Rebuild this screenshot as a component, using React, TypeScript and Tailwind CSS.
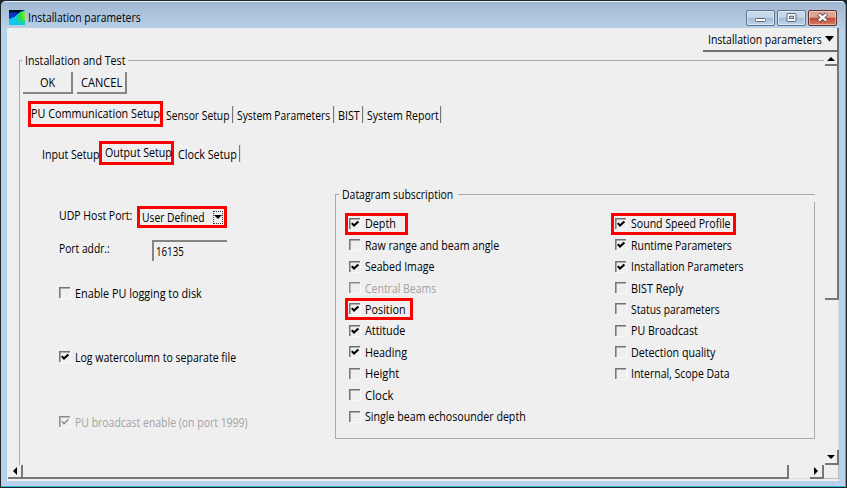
import { useLayoutEffect, useRef, type ReactNode } from 'react';

/** Text condensed horizontally so that it fills a fixed width. */
function Label({ children, w, className = '' }: { children: string; w: number; className?: string }) {
  const ref = useRef<HTMLSpanElement>(null);
  useLayoutEffect(() => {
    const el = ref.current;
    if (!el) return;
    el.style.transform = `scaleX(${(w + 0.5) / el.offsetWidth})`;
  }, [children, w]);
  return (
    <span className={`inline-block h-[15px] shrink-0 whitespace-nowrap ${className}`} style={{ width: w }}>
      <span ref={ref} className="inline-block origin-left">{children}</span>
    </span>
  );
}

function Highlight({ className }: { className: string }) {
  return <div className={`pointer-events-none absolute border-[3px] border-[#fe0000] ${className}`} />;
}

function Check({ label, w, checked, disabled, children, className = '' }: {
  label: string; w: number; checked?: boolean; disabled?: boolean; children?: ReactNode; className?: string;
}) {
  return (
    <div className={`relative flex items-center ${className}`}>
      <svg width="12" height="12" viewBox="0 0 12 12" className="mr-1 shrink-0">
        <path d="M.8 11V.8H11" fill="none" stroke={disabled ? '#8c8c8c' : '#717171'} strokeWidth="1.5" />
        <path d="M1.5 11.5h10V1.5" fill="none" stroke="#f8f8f8" />
        {checked && (
          <path d="M2.8 5.1L5 7.6L9.4 3.4" fill="none" stroke={disabled ? '#777' : '#000'} strokeWidth={disabled ? 1.2 : 2.1} />
        )}
      </svg>
      <Label w={w} className={disabled ? 'text-[#a3a3a3]' : ''}>{label}</Label>
      {children}
    </div>
  );
}

function WinButton({ kind }: { kind: 'min' | 'max' | 'close' }) {
  return (
    <div className={`flex h-4 w-[29px] items-center justify-center rounded-[2px] border shadow-[inset_0_0_0_1px_rgba(255,255,255,0.45)] ${kind === 'close' ? 'border-[#652c2c] bg-linear-to-b from-[#dca397] from-45% via-[#bd4632] via-50% to-[#d68068]' : 'border-[#5d728c] bg-linear-to-b from-[#c5d7eb] from-45% via-[#a2bad4] via-50% to-[#bed5eb]'}`}>
      <svg width="15" height="12" viewBox="0 0 15 12">
        {kind === 'min' && <rect x="2.5" y="6.5" width="10" height="3" rx="1" fill="#fff" stroke="#596575" />}
        {kind === 'max' && (
          <>
            <rect x="3" y="1.5" width="9" height="8" rx="1" fill="#fff" stroke="#596575" />
            <rect x="5.5" y="4.2" width="4" height="2.4" fill="#b9cde2" stroke="#596575" />
          </>
        )}
        {kind === 'close' && (
          <>
            <path d="M3.5 2L11.5 9M11.5 2L3.5 9" stroke="#604548" strokeWidth="4.2" />
            <path d="M3.8 2.3L11.2 8.7M11.2 2.3L3.8 8.7" stroke="#fff" strokeWidth="2.4" />
          </>
        )}
      </svg>
    </div>
  );
}

type Item = { label: string; w: number; checked?: boolean; disabled?: boolean; mark?: string };

const leftItems: Item[] = [
  { label: 'Depth', w: 30, checked: true, mark: '-left-1 top-0 h-[22px] w-[63px]' },
  { label: 'Raw range and beam angle', w: 134 },
  { label: 'Seabed Image', w: 69, checked: true },
  { label: 'Central Beams', w: 71, disabled: true },
  { label: 'Position', w: 40, checked: true, mark: '-left-1 -top-[1px] h-[22px] w-[68px]' },
  { label: 'Attitude', w: 40, checked: true },
  { label: 'Heading', w: 42, checked: true },
  { label: 'Height', w: 34 },
  { label: 'Clock', w: 28 },
  { label: 'Single beam echosounder depth', w: 160 },
];

const rightItems: Item[] = [
  { label: 'Sound Speed Profile', w: 99, checked: true, mark: '-left-1 top-0 h-[22px] w-[125px]' },
  { label: 'Runtime Parameters', w: 100, checked: true },
  { label: 'Installation Parameters', w: 112, checked: true },
  { label: 'BIST Reply', w: 52 },
  { label: 'Status parameters', w: 88 },
  { label: 'PU Broadcast', w: 66 },
  { label: 'Detection quality', w: 84 },
  { label: 'Internal, Scope Data', w: 98 },
];

function Column({ items }: { items: Item[] }) {
  return (
    <div className="flex flex-col">
      {items.map((it) => (
        <Check key={it.label} {...it} className="h-[21.45px]">
          {it.mark && <Highlight className={it.mark} />}
        </Check>
      ))}
    </div>
  );
}

const Separator = () => <div className="h-[17px] w-[2px] shrink-0 border-r border-[#ddd] bg-[#777]" />;

function Arrow({ dir }: { dir: 'up' | 'down' | 'left' | 'right' }) {
  const d = { up: 'M0 7L4 3L8 7Z', down: 'M0 2L8 2L4 6Z', left: 'M6 0V8L2 4Z', right: 'M2 0V8L6 4Z' }[dir];
  return <svg width="8" height="8" viewBox="0 0 8 8"><path d={d} fill="#000" /></svg>;
}

export default function App() {
  return (
    <div className="relative flex h-[488px] w-[847px] flex-col overflow-hidden bg-[#20252b] text-[12px] leading-[15px] text-black" style={{ fontFamily: '"Open Sans", "Noto Sans", sans-serif' }}>
      <div className="mt-px ml-px flex h-[486px] w-[845px] flex-col rounded-t-[5px] border-t border-r border-b border-t-[#e8f1fa] border-r-[#39b6d1] border-b-[#39b6d1] bg-[#b9d1ea]">
        <header className="flex h-[26px] shrink-0 items-center rounded-t-[5px] bg-linear-to-b from-[#a1b8d2] to-[#b8cfe8] pr-[8px] pl-2">
          <svg width="16" height="15" viewBox="0 0 16 15" className="mt-[5px] mr-[3px]">
            <defs>
              <linearGradient id="beam" x1="1" y1="0" x2="0" y2="0.3">
                <stop offset="0" stopColor="#9bea2b" />
                <stop offset="0.5" stopColor="#2be03c" />
                <stop offset="0.85" stopColor="#10d8a5" />
                <stop offset="1" stopColor="#0bc8e8" />
              </linearGradient>
            </defs>
            <rect width="16" height="15" fill="#12c4ee" />
            <path d="M0 0H16L11 2L5 7L0 6Z" fill="#051027" />
            <path d="M0 3L4 2L9 3L5 7L0 9Z" fill="#0a2fc4" />
            <path d="M16 1L11 3L6 7L10 13H16Z" fill="url(#beam)" />
            <path d="M12 12L16 10V15H11Z" fill="#14cfc0" />
          </svg>
          <Label w={112} className="mt-[4px]">Installation parameters</Label>
          <div className="mt-[5px] ml-auto flex gap-[2px]">
            <WinButton kind="min" />
            <WinButton kind="max" />
            <WinButton kind="close" />
          </div>
        </header>

        <div className="ml-[6px] flex h-[453px] w-[832px] flex-col bg-[#efefef]">
          <div className="flex h-[24px] shrink-0 justify-end">
            <div className="flex w-[136px] items-center justify-between border-r-2 border-b-2 border-[#707070] pr-[3px] pl-[5px]">
              <Label w={113}>Installation parameters</Label>
              <svg width="9" height="6" viewBox="0 0 9 6"><path d="M0 0H9L4.5 5.5Z" fill="#000" /></svg>
            </div>
          </div>

          <div className="flex h-[413px] shrink-0">
            <main className="relative ml-3 flex w-[805px] flex-col">
              <div className="flex h-[17px] items-center">
                <div className="h-[9px] w-[3px] self-end border-t border-l border-[#aaa]" />
                <Label w={100} className="ml-[3px]">Installation and Test</Label>
                <div className="ml-[3px] h-px flex-1 bg-[#aaa]" />
              </div>
              <div className="flex flex-1 flex-col border-l border-[#aaa]">
                <div className="mt-[3px] ml-[3px] flex h-[22px] gap-1">
                  <div className="flex w-[50px] items-center justify-center border-r-2 border-b-2 border-[#858585]"><Label w={15}>OK</Label></div>
                  <div className="flex w-[50px] items-center justify-center border-r-2 border-b-2 border-[#858585]"><Label w={41}>CANCEL</Label></div>
                </div>

                <nav className="relative mt-[7px] ml-2 flex h-[26px] items-center">
                  <Highlight className="top-0 left-0 h-[26px] w-[135px]" />
                  <Label w={129} className="mb-[2px] ml-[3px]">PU Communication Setup</Label>
                  <Label w={63} className="mt-[2px] ml-[6px]">Sensor Setup</Label>
                  <div className="ml-[3px]"><Separator /></div>
                  <Label w={93} className="mt-[2px] ml-[3px]">System Parameters</Label>
                  <div className="ml-[3px]"><Separator /></div>
                  <Label w={21} className="mt-[2px] ml-[3px]">BIST</Label>
                  <div className="ml-[3px]"><Separator /></div>
                  <Label w={71} className="mt-[2px] ml-[3px]">System Report</Label>
                  <div className="ml-[2px]"><Separator /></div>
                </nav>

                <nav className="relative mt-[14px] ml-[18px] flex h-6 items-center">
                  <Label w={57} className="mt-[3px] ml-[4px]">Input Setup</Label>
                  <Highlight className="top-0 left-[61px] h-[24px] w-[75px]" />
                  <Label w={66} className="mb-px ml-[6px]">Output Setup</Label>
                  <Label w={58} className="mt-[3px] ml-[7px]">Clock Setup</Label>
                  <div className="ml-[3px]"><Separator /></div>
                </nav>

                <div className="flex h-[299px]">
                  <section className="ml-[39px] w-[276px] pt-[41px]">
                    <div className="flex h-[22px] items-center">
                      <Label w={73} className="mb-[3px]">UDP Host Port:</Label>
                      <div className="ml-[5px] flex h-[22px] w-[90px] items-center justify-between border-[3px] border-[#fe0000] pr-px pl-[2px]">
                        <Label w={62}>User Defined</Label>
                        <div className="flex h-[13px] w-[10px] items-center justify-center border border-dotted border-[#333]"><Arrow dir="down" /></div>
                      </div>
                    </div>
                    <div className="mt-3 flex h-[21px] items-center">
                      <Label w={50} className="mb-[5px]">Port addr.:</Label>
                      <div className="ml-[43px] flex h-[21px] w-[75px] items-center border-t-2 border-l-2 border-[#858585] pl-[2px]"><Label w={27}>16135</Label></div>
                    </div>
                    <Check label="Enable PU logging to disk" w={126} className="mt-[22px] h-5" />
                    <Check label="Log watercolumn to separate file" w={161} checked className="mt-[44px] h-5" />
                    <Check label="PU broadcast enable (on port 1999)" w={172} checked disabled className="mt-[45px] h-5" />
                  </section>

                  <section className="mt-[22px] w-[480px]">
                    <div className="flex h-[15px] items-center">
                      <div className="h-2 w-1 self-end border-t border-l border-[#aaa]" />
                      <Label w={111} className="ml-[3px]">Datagram subscription</Label>
                      <div className="ml-[5px] h-px flex-1 bg-[#aaa]" />
                    </div>
                    <div className="flex h-[237px] border-r border-b border-l border-[#aaa] pt-[11px] pl-[13px]">
                      <div className="w-[266px]"><Column items={leftItems} /></div>
                      <Column items={rightItems} />
                    </div>
                  </section>
                </div>
              </div>
            </main>

            <div className="ml-[1px] flex w-[14px] flex-col">
              <div className="flex h-[14px] items-center justify-center border-r-2 border-b-2 border-[#777]"><Arrow dir="up" /></div>
              <div className="h-[234px] border-r-2 border-b-2 border-[#777]" />
              <div className="flex-1 border-r border-[#ddd]" />
              <div className="flex h-[15px] items-center justify-center border-r-2 border-b-2 border-[#777]"><Arrow dir="down" /></div>
            </div>
          </div>

          <div className="ml-px flex h-[14px] shrink-0">
            <div className="flex w-[15px] items-center justify-center border-r-2 border-b-2 border-[#777]"><Arrow dir="left" /></div>
            <div className="w-[766px] border-r-2 border-b-2 border-[#777]" />
            <div className="w-[21px] border-b border-[#ddd]" />
            <div className="flex w-[14px] items-center justify-center border-r-2 border-b-2 border-[#777]"><Arrow dir="right" /></div>
            <div className="w-[15px] border-r border-b border-[#bbb]" />
          </div>
        </div>
      </div>
    </div>
  );
}
